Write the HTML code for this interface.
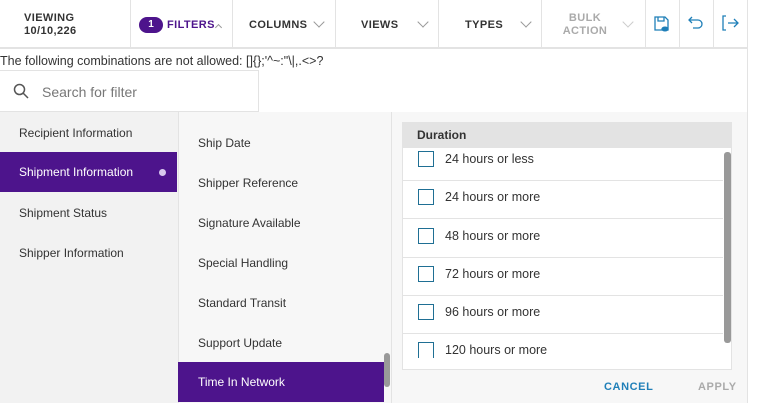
<!DOCTYPE html>
<html><head><style>
*{box-sizing:border-box;margin:0;padding:0}
body{width:761px;height:403px;overflow:hidden;background:#fff;font-family:"Liberation Sans",sans-serif;position:relative;color:#333}
.a{position:absolute}
.hd{font-weight:bold;font-size:11px;letter-spacing:.4px;color:#333}
.vl{position:absolute;top:0;width:1px;height:49px;background:#e3e3e3}
.chev{position:absolute;width:8px;height:8px;border-right:1.2px solid #999;border-bottom:1.2px solid #999;transform:rotate(45deg)}
.li{position:absolute;left:0;font-size:12px;color:#333;height:40px;line-height:40px;padding-left:19px}
.ml{position:absolute;left:178px;font-size:12px;color:#333;height:40px;line-height:40px;padding-left:20px;width:206px}
.row{position:absolute;left:403px;width:320px;border-bottom:1px solid #e3e3e3;font-size:12.5px;color:#333}
.cb{position:absolute;left:15px;width:16px;height:16px;border:1.5px solid #1f6f94}
</style></head><body>
<div class="a" style="left:0;top:0;width:748px;height:49px;border-bottom:2px solid #e3e3e3"></div>
<div class="vl" style="left:130px"></div><div class="vl" style="left:232px"></div><div class="vl" style="left:335px"></div><div class="vl" style="left:438px"></div><div class="vl" style="left:541px"></div><div class="vl" style="left:645px"></div><div class="vl" style="left:679px"></div><div class="vl" style="left:713px"></div><div class="vl" style="left:747px;height:403px"></div>
<div class="a hd" style="left:24px;top:12px;line-height:13px">VIEWING<br>10/10,226</div>
<div class="a" style="left:139px;top:17px;width:24px;height:16px;border-radius:8px;background:#4d148c;color:#fff;font-size:10px;font-weight:bold;text-align:center;line-height:16px">1</div>
<div class="a hd" style="left:167px;top:19px;color:#4d148c">FILTERS</div>
<div class="a" style="left:216px;top:25px;width:5px;height:5px;border-left:1px solid #999;border-top:1px solid #999;transform:rotate(45deg)"></div>
<div class="a hd" style="left:249px;top:19px">COLUMNS</div><div class="chev" style="left:315px;top:18px"></div>
<div class="a hd" style="left:361px;top:19px">VIEWS</div><div class="chev" style="left:419px;top:18px"></div>
<div class="a hd" style="left:465px;top:19px">TYPES</div><div class="chev" style="left:522px;top:18px"></div>
<div class="a hd" style="left:560px;top:12px;line-height:13px;color:#aaa;text-align:center;width:50px">BULK<br>ACTION</div><div class="chev" style="left:624px;top:18px;border-color:#ccc"></div>
<svg class="a" style="left:653px;top:15px" width="18" height="18" viewBox="0 0 18 18" fill="none" stroke="#1f7fb8" stroke-width="1.3"><path d="M2 2h10l3 3v10H2z"/><path d="M5 2v4h6V2"/><ellipse cx="12" cy="14" rx="3" ry="1.8" fill="#1f7fb8"/></svg>
<svg class="a" style="left:687px;top:15px" width="18" height="16" viewBox="0 0 18 16" fill="none" stroke="#1f7fb8" stroke-width="1.3"><path d="M5 2L2 5l3 3"/><path d="M2 5h9a4 4 0 010 8H6"/></svg>
<svg class="a" style="left:721px;top:14px" width="18" height="18" viewBox="0 0 18 18" fill="none" stroke="#1f7fb8" stroke-width="1.3"><path d="M5 2H2v14h3"/><path d="M7 9h10M13 5l4 4-4 4"/></svg>
<div class="a" style="left:0;top:54px;font-size:12.5px;color:#333">The following combinations are not allowed: []{};'^~:"\|,.&lt;&gt;?</div>
<div class="a" style="left:0;top:70px;width:259px;height:42px;border:1px solid #e3e3e3;border-left:none"></div>
<svg class="a" style="left:13px;top:83px" width="16" height="16" viewBox="0 0 16 16" fill="none" stroke="#555" stroke-width="1.5"><circle cx="6.5" cy="6.5" r="5"/><path d="M10 10l5 5"/></svg>
<div class="a" style="left:42px;top:84px;font-size:14px;color:#777">Search for filter</div>
<div class="a" style="left:0;top:112px;width:178px;height:291px;background:#f2f2f2"></div>
<div class="li" style="top:113px">Recipient Information</div>
<div class="li" style="top:152px;width:177px;background:#4d148c;color:#fff">Shipment Information</div>
<div class="a" style="left:159px;top:169px;width:7px;height:7px;border-radius:50%;background:#d8c9ee"></div>
<div class="li" style="top:193px">Shipment Status</div>
<div class="li" style="top:233px">Shipper Information</div>
<div class="a" style="left:178px;top:112px;width:213px;height:291px;background:#f7f7f7;border-left:1px solid #e3e3e3"></div>
<div class="ml" style="top:123px">Ship Date</div>
<div class="ml" style="top:163px">Shipper Reference</div>
<div class="ml" style="top:203px">Signature Available</div>
<div class="ml" style="top:243px">Special Handling</div>
<div class="ml" style="top:283px">Standard Transit</div>
<div class="ml" style="top:323px">Support Update</div>
<div class="ml" style="top:362px;background:#4d148c;color:#fff">Time In Network</div>
<div class="a" style="left:384px;top:353px;width:6px;height:34px;border-radius:3px;background:#999"></div>
<div class="a" style="left:391px;top:112px;width:356px;height:291px;background:#f7f7f7;border-left:1px solid #e3e3e3"></div>
<div class="a" style="left:402px;top:122px;width:330px;height:26px;background:#e3e3e3;font-size:12px;font-weight:bold;color:#333;padding:6px 0 0 15px">Duration</div>
<div class="a" style="left:402px;top:148px;width:330px;height:222px;background:#fff;border:1px solid #e3e3e3;border-top:none"></div>
<div class="row" style="top:148px;height:33px"><div class="cb" style="top:3px"></div><span class="a" style="left:42px;top:4px">24 hours or less</span></div>
<div class="row" style="top:181px;height:38px"><div class="cb" style="top:8px"></div><span class="a" style="left:42px;top:9px">24 hours or more</span></div>
<div class="row" style="top:219px;height:39px"><div class="cb" style="top:9px"></div><span class="a" style="left:42px;top:10px">48 hours or more</span></div>
<div class="row" style="top:258px;height:38px"><div class="cb" style="top:8px"></div><span class="a" style="left:42px;top:9px">72 hours or more</span></div>
<div class="row" style="top:296px;height:38px"><div class="cb" style="top:8px"></div><span class="a" style="left:42px;top:9px">96 hours or more</span></div>
<div class="row" style="top:334px;height:24px;border:none;overflow:hidden"><div class="cb" style="top:8px;height:20px"></div><span class="a" style="left:42px;top:9px">120 hours or more</span></div>
<div class="a" style="left:724px;top:152px;width:7px;height:191px;border-radius:3px;background:#999"></div>
<div class="a" style="left:604px;top:381px;font-size:11px;font-weight:bold;letter-spacing:.6px;color:#1f7fb8">CANCEL</div>
<div class="a" style="left:698px;top:381px;font-size:11px;font-weight:bold;letter-spacing:.6px;color:#aaa">APPLY</div>
</body></html>
